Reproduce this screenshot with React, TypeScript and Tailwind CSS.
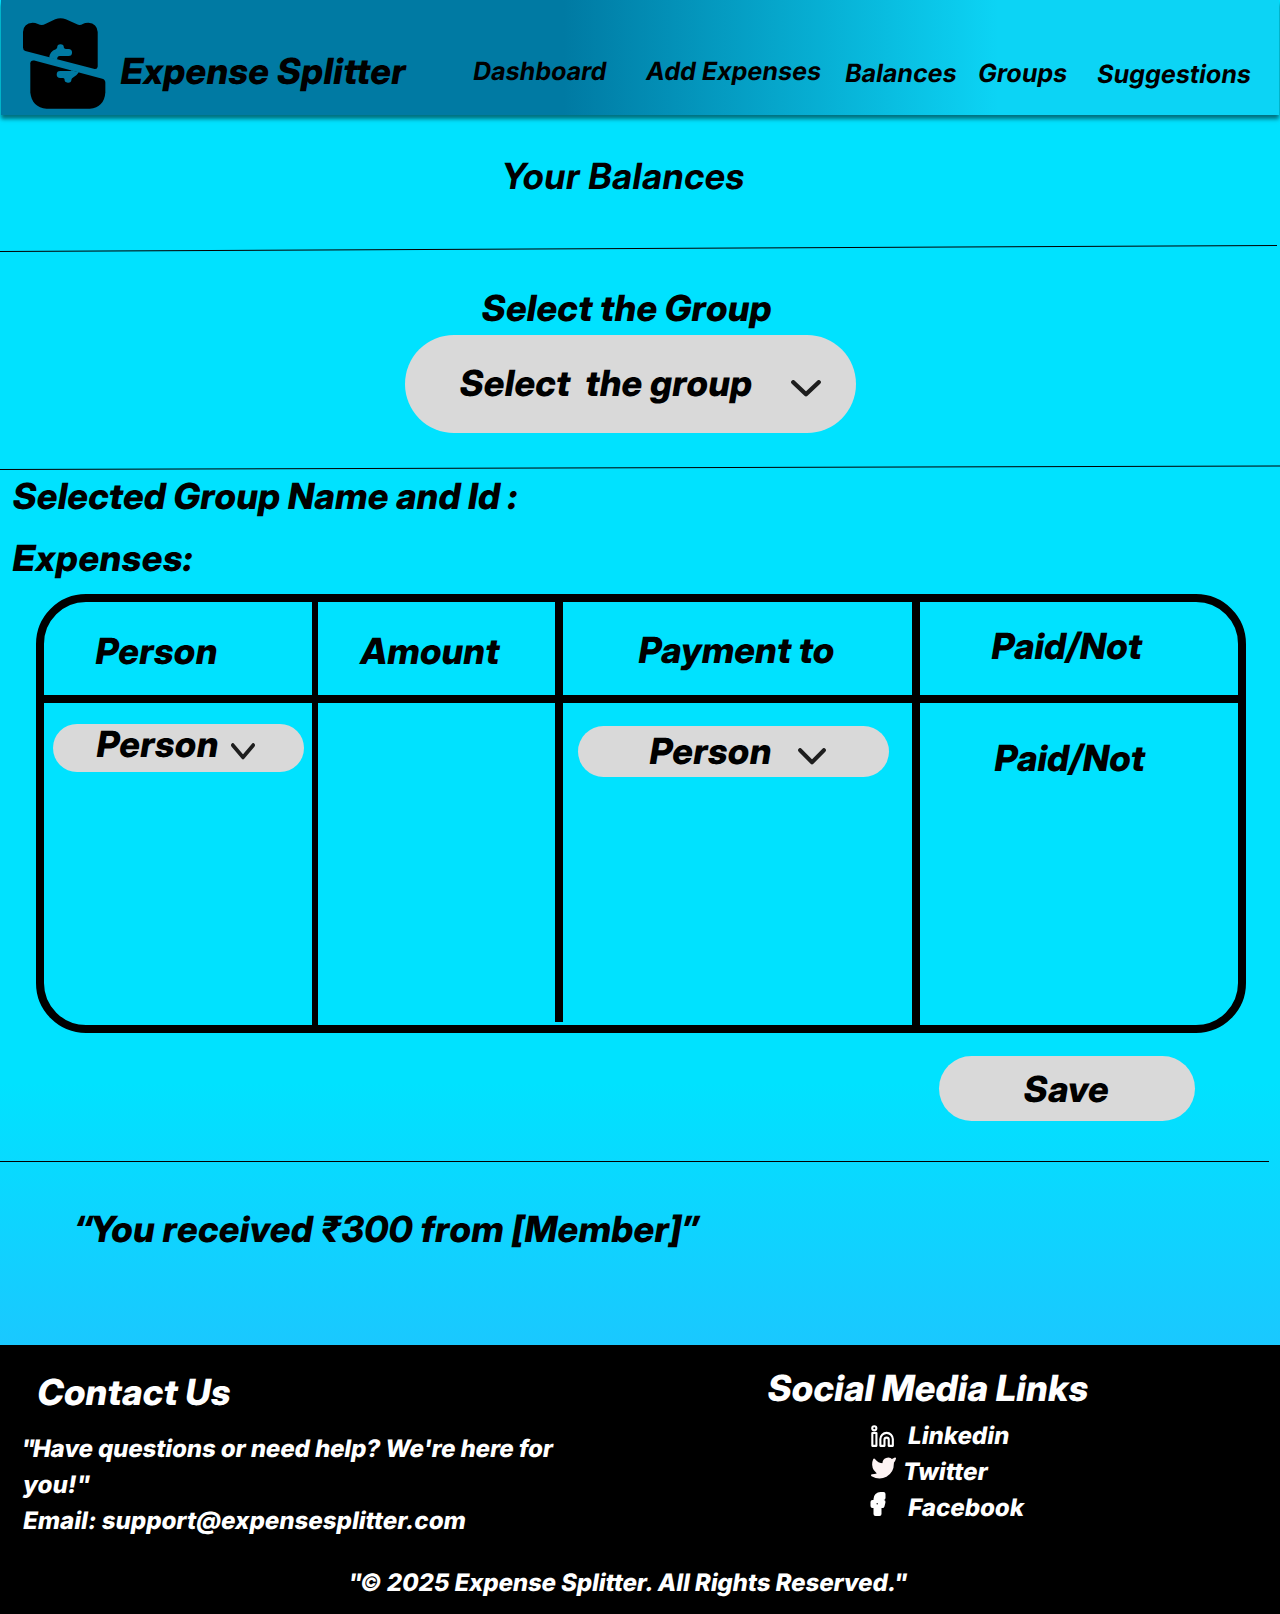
import type { ReactNode } from "react";

function Logo() {
  return (
    <svg viewBox="36 22 256 278" className="ml-[21px] mt-[17px] h-[93px] w-[85px] shrink-0">
      <path
        d="M39 66Q40 40 68 38Q76 38 84 42Q96 48 106 42L136 28Q152 21 168 28L200 42Q210 48 219 42Q225 38 236 38Q262 40 264 66V170Q263 180 252 177L46 123Q39 121 39 113Z"
        fill="#000"
      />
      <path
        d="M61 160Q62 150 73 152L278 207Q287 210 287 218V248Q284 292 240 297H110Q66 293 61 248Z"
        fill="#000"
      />
      <path
        d="M118 144Q119 124 138 118Q142 115 142 113A10 10 0 0 1 162 113Q163 117 168 117H176A10.500 10.500 0 0 1 176 138.500H150Q141 139 142 150Z"
        fill="#007aa3"
      />
      <path
        d="M184 181L207 187Q202 196 190 203Q185 206 185 209A10.500 10.500 0 0 1 164 208Q163 204 158 204.500H151A10.500 10.500 0 0 1 151 183.500H184Z"
        fill="#007aa3"
      />
    </svg>
  );
}

function Chevron({ className }: { className: string }) {
  return (
    <svg viewBox="0 0 29 17" preserveAspectRatio="none" className={className}>
      <path
        d="M2.200 2.200L14.500 14.200L26.800 2.200"
        fill="none"
        stroke="#1e1e1e"
        strokeWidth="4.200"
        strokeLinecap="round"
        strokeLinejoin="round"
      />
    </svg>
  );
}

function LinkedinIcon() {
  return (
    <svg viewBox="33 32 70 67" className="mt-[5px] h-[22px] w-[23px]">
      <g fill="none" stroke="#fff" strokeWidth="6.400" strokeLinejoin="round">
        <circle cx="43" cy="42" r="6.300" />
        <path d="M37 56.500H49.500V95.500H37Z" />
        <path d="M61.500 95.500V75A19 19 0 0 1 99.500 75V95.500H87V77A6.500 6.500 0 0 0 74 77V95.500Z" />
      </g>
    </svg>
  );
}

function TwitterIcon() {
  return (
    <svg viewBox="0 1.500 24 21" className="mt-px h-[22px] w-[25px]">
      <path
        d="M23 3a10.900 10.900 0 0 1-3.140 1.530 4.480 4.480 0 0 0-7.860 3v1A10.660 10.660 0 0 1 3 4s-4 9 5 13a11.640 11.640 0 0 1-7 2c9 5 20 0 20-11.500a4.500 4.500 0 0 0-.08-.83A7.720 7.720 0 0 0 23 3z"
        fill="#fdf3f3"
        stroke="#fdf3f3"
        strokeWidth="2"
        strokeLinejoin="round"
      />
    </svg>
  );
}

function FacebookIcon() {
  return (
    <svg viewBox="5 0 15 24" className="h-[24px] w-[16px]">
      <path
        d="M18 2h-3a5 5 0 0 0-5 5v3H7v4h3v8h4v-8h3l1-4h-4V7a1 1 0 0 1 1-1h3z"
        fill="#fff"
        stroke="#fff"
        strokeWidth="4"
        strokeLinejoin="round"
      />
      <circle cx="11.700" cy="11.800" r="0.700" fill="#000" />
    </svg>
  );
}

function Divider({ from, to, width }: { from: number; to: number; width: number }) {
  return (
    <svg viewBox="0 0 1280 8" className="block h-[8px] w-[1280px]">
      <line x1="0" y1={from} x2={width} y2={to} stroke="#000" strokeWidth="1" />
    </svg>
  );
}

/* Heading text: upright display cut, slanted around its baseline. */
function Big({ className, children }: { className: string; children: ReactNode }) {
  return (
    <div
      className={`origin-[0_80%] -translate-x-px -skew-x-[9.4deg] whitespace-pre font-['Inter_Display','Inter',sans-serif] text-[36px] leading-[44px] ${className}`}
    >
      {children}
    </div>
  );
}

function NavItem({ className, children }: { className: string; children: ReactNode }) {
  return <a className={`block origin-[0_80%] -translate-x-px -skew-x-[9.4deg] ${className}`}>{children}</a>;
}

function Line({ className = "", children }: { className?: string; children: ReactNode }) {
  return (
    <span className={`block origin-[0_74%] translate-y-px -skew-x-[9.4deg] whitespace-nowrap ${className}`}>
      {children}
    </span>
  );
}

function Pill({ className, children }: { className: string; children: ReactNode }) {
  return <button className={`flex items-start bg-[#d9d9d9] text-left ${className}`}>{children}</button>;
}

export default function App() {
  return (
    <div className="w-[1280px] overflow-hidden font-['Inter',sans-serif] font-extrabold text-black">
      <main className="flex h-[1345px] flex-col bg-[linear-gradient(180deg,#00e2ff_0%,#00e2ff_80.5%,#1ac8ff_100%)]">
        <header className="mx-px flex h-[115px] shrink-0 items-start bg-[linear-gradient(90deg,#007aa3_0%,#007aa3_44%,#0cd4f5_78%,#0cd4f5_100%)] shadow-[0_4px_4px_rgba(0,0,0,0.5)]">
          <Logo />
          <Big className="ml-[13px] mt-[49px] w-[353px] tracking-[0.34px]">Expense Splitter</Big>
          <nav className="flex items-start whitespace-nowrap text-[25px] font-bold leading-[30px]">
            <NavItem className="mt-[56px] w-[173px]">Dashboard</NavItem>
            <NavItem className="mt-[56px] w-[199px] tracking-[0.05px]">Add Expenses</NavItem>
            <NavItem className="mt-[58px] w-[133px]">Balances</NavItem>
            <NavItem className="mt-[58px] w-[119px]">Groups</NavItem>
            <NavItem className="mt-[59px] tracking-[0.06px]">Suggestions</NavItem>
          </nav>
        </header>

        <Big className="ml-[501px] mt-[39px] font-bold tracking-[0.6px]">Your Balances</Big>
        <div className="mt-[46px]">
          <Divider from={7.5} to={1.5} width={1277} />
        </div>

        <Big className="ml-[481px] mt-[34px] tracking-[0.3px]">Select the Group</Big>
        <Pill className="ml-[405px] mt-[5px] h-[98px] w-[451px] rounded-[49px]">
          <Big className="ml-[54px] mt-[26px] w-[332px] tracking-[0.27px]">{"Select  the group"}</Big>
          <Chevron className="mt-[45px] h-[17px] w-[30px]" />
        </Pill>

        <div className="mt-[31px]">
          <Divider from={5.5} to={2} width={1280} />
        </div>
        <Big className="ml-[12px] mt-[2px] tracking-[0.24px]">Selected Group Name and Id :</Big>
        <Big className="ml-[12px] mt-[18px] tracking-[0.6px]">Expenses:</Big>

        <section className="ml-[36px] mt-[14px] flex h-[439px] w-[1210px] shrink-0 items-start rounded-[50px] border-8 border-black">
          <div className="h-full w-[274px] border-r-[6px] border-black">
            <div className="h-[101px] border-b-8 border-black pl-[51px] pt-[27px]">
              <Big className="tracking-[0.5px]">Person</Big>
            </div>
            <Pill className="ml-[9px] mt-[21px] h-[48px] w-[251px] rounded-[24px]">
              <Big className="-mt-[2px] ml-[43px] w-[135px] tracking-[0.5px]">Person</Big>
              <Chevron className="mt-[19px] h-[17px] w-[24px]" />
            </Pill>
          </div>
          <div className="h-[420px] w-[245px] border-r-8 border-black">
            <div className="h-[101px] border-b-8 border-black pl-[42px] pt-[27px]">
              <Big className="tracking-[0.2px]">Amount</Big>
            </div>
          </div>
          <div className="h-full w-[357px] border-r-8 border-black">
            <div className="h-[101px] border-b-8 border-black pl-[75px] pt-[26px]">
              <Big className="tracking-[0.2px]">Payment to</Big>
            </div>
            <Pill className="ml-[15px] mt-[23px] h-[51px] w-[311px] rounded-[25.5px]">
              <Big className="ml-[71px] mt-[3px] w-[149px] tracking-[0.5px]">Person</Big>
              <Chevron className="mt-[22px] h-[17px] w-[28px]" />
            </Pill>
          </div>
          <div className="h-full w-[318px]">
            <div className="h-[101px] border-b-8 border-black pl-[71px] pt-[22px]">
              <Big className="tracking-[0.1px]">Paid/Not</Big>
            </div>
            <Big className="ml-[74px] mt-[33px] tracking-[0.1px]">Paid/Not</Big>
          </div>
        </section>

        <Pill className="ml-[939px] mt-[23px] h-[65px] w-[256px] rounded-[32.5px]">
          <Big className="ml-[84px] mt-[11px] tracking-[0.3px]">Save</Big>
        </Pill>

        <div className="mt-[36px]">
          <Divider from={4.5} to={4.5} width={1269} />
        </div>
        <Big className="ml-[74px] mt-[42px] tracking-[0.36px]">
          <span className="tracking-[-1.5px]">“</span>You received ₹300 from [Member]”
        </Big>
      </main>

      <footer className="h-[269px] bg-black text-[24px] leading-[36px] text-white">
        <div className="flex h-[219px] items-start">
          <div className="w-[767px] pt-[25px]">
            <Big className="ml-[37px] tracking-[0.25px]">Contact Us</Big>
            <p className="ml-[22px] mt-[16px]">
              <Line className="-ml-[2px] tracking-[-0.09px]">
                <span className="tracking-[-2.5px]">"</span>Have questions or need help? We're here for
              </Line>
              <Line>you!"</Line>
              <Line className="tracking-[0.04px]">Email: support@expensesplitter.com</Line>
            </p>
          </div>
          <div className="pt-[21px]">
            <Big className="tracking-[0.27px]">Social Media Links</Big>
            <ul className="ml-[104px] mt-[7px]">
              <li className="flex h-[36px] items-start">
                <span className="w-[36px] pt-[3px]"><LinkedinIcon /></span>
                <Line>Linkedin</Line>
              </li>
              <li className="flex h-[36px] items-start">
                <span className="w-[31px] pt-[3px]"><TwitterIcon /></span>
                <Line className="tracking-[0.1px]">Twitter</Line>
              </li>
              <li className="flex h-[36px] items-start">
                <span className="-ml-px w-[37px] pt-[3px]"><FacebookIcon /></span>
                <Line>Facebook</Line>
              </li>
            </ul>
          </div>
        </div>
        <p className="ml-[347px]">
          <Line className="tracking-[-0.08px]">
            <span className="tracking-[-2.5px]">"</span>© 2025 Expense Splitter. All Rights Reserved."
          </Line>
        </p>
      </footer>
    </div>
  );
}
